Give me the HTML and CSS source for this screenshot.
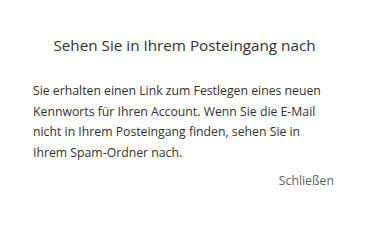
FILE: index.html
```html
<!DOCTYPE html>
<html lang="de">
<head>
<meta charset="utf-8">
<link rel="stylesheet" href="styles.css">
</head>
<body>
<div class="dialog">
  <h1 class="title">Sehen Sie in Ihrem Posteingang nach</h1>
  <p class="text">Sie erhalten einen Link zum Festlegen eines neuen Kennworts für Ihren Account. Wenn Sie die E-Mail nicht in Ihrem Posteingang finden, sehen Sie in Ihrem Spam-Ordner nach.</p>
  <div class="actions"><button class="close" type="button">Schließen</button></div>
</div>
</body>
</html>
```

FILE: styles.css
```css
html, body {
  margin: 0;
  padding: 0;
  background: #ffffff;
}
body {
  font-family: "Open Sans", "Noto Sans", sans-serif;
  width: 375px;
  height: 241px;
}
.dialog {
  padding: 33px 41px 0 33px;
}
.title {
  margin: 0 -2px 0 0;
  font-size: 15.25px;
  font-weight: 400;
  color: #323130;
  text-align: center;
  line-height: 24px;
}
.text {
  margin: 24px 0 0 0;
  font-size: 12.25px;
  line-height: 20.7px;
  color: #323130;
}
.actions {
  display: flex;
  justify-content: flex-end;
  margin-top: 7px;
  margin-right: 0;
}
.close {
  border: none;
  background: none;
  padding: 0;
  font-family: inherit;
  font-size: 12.25px;
  line-height: 20px;
  color: #605e5c;
  cursor: pointer;
}
```
